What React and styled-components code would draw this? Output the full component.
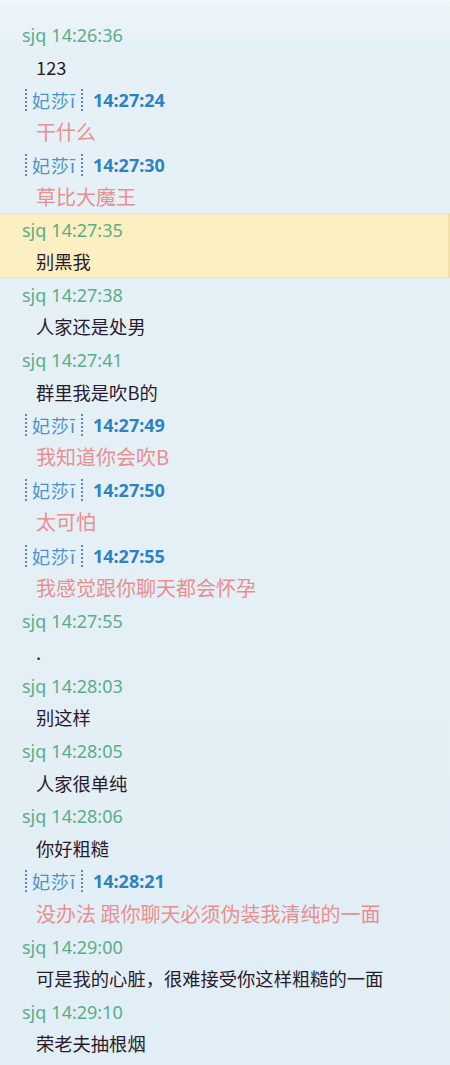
import React from "react";
import styled, { createGlobalStyle } from "styled-components";

const GlobalStyle = createGlobalStyle`
  html, body {
    margin: 0;
    padding: 0;
    background: #e3eff5;
  }
  body {
    font-family: "Noto Sans", "Noto Sans CJK SC", sans-serif;
  }
`;

const Window = styled.div`
  width: 450px;
  height: 1065px;
  overflow: hidden;
  box-sizing: border-box;
  padding-top: 16px;
  background: linear-gradient(180deg, #eef5f9 0px, #e6f1f7 40px, #e2eef5 100%);
  border-top: 2px solid #f4f8fb;
`;

const Message = styled.div`
  height: 65.2px;
  box-sizing: border-box;
  display: flex;
  flex-direction: column;
  background: ${(p) => (p.$active ? "#fcefc1" : "transparent")};
  border-top: 1px solid ${(p) => (p.$active ? "#f3e3ae" : "transparent")};
  border-bottom: 1px solid ${(p) => (p.$active ? "#f3e3ae" : "transparent")};
  border-right: 2px solid ${(p) => (p.$active ? "#f1e0a8" : "transparent")};
  margin-top: ${(p) => (p.$active ? "-1px" : "0")};
`;

const Header = styled.div`
  height: 32px;
  display: flex;
  align-items: center;
  padding-left: ${(p) => (p.$me ? "22px" : "25px")};
  font-size: 18px;
  color: ${(p) => (p.$me ? "#5aae88" : "#2f82c2")};
  white-space: nowrap;
`;

const Name = styled.span`
  font-family: "Noto Sans CJK SC", sans-serif;
  color: #4b92cf;
  font-size: 18px;
  letter-spacing: 1px;
  margin: 0 5px 0 5px;
`;

const Bar = styled.span`
  display: inline-block;
  width: 0;
  height: 22px;
  border-left: 2px dotted #4f8ec6;
  vertical-align: middle;
`;

const Time = styled.span`
  font-weight: ${(p) => (p.$bold ? 700 : 400)};
  margin-left: ${(p) => (p.$bold ? "10px" : "5px")};
`;

const Body = styled.div`
  flex: 1;
  display: flex;
  align-items: center;
  padding-left: 36px;
  font-family: "Noto Sans CJK SC", sans-serif;
  font-size: ${(p) => (p.$me ? "18.3px" : "20px")};
  color: ${(p) => (p.$me ? "#2a1b2c" : "#e98f8f")};
  white-space: nowrap;
`;

const messages = [
  { me: true, time: "14:26:36", text: "123" },
  { me: false, time: "14:27:24", text: "干什么" },
  { me: false, time: "14:27:30", text: "草比大魔王" },
  { me: true, time: "14:27:35", text: "别黑我", active: true },
  { me: true, time: "14:27:38", text: "人家还是处男" },
  { me: true, time: "14:27:41", text: "群里我是吹B的" },
  { me: false, time: "14:27:49", text: "我知道你会吹B" },
  { me: false, time: "14:27:50", text: "太可怕" },
  { me: false, time: "14:27:55", text: "我感觉跟你聊天都会怀孕" },
  { me: true, time: "14:27:55", text: "." },
  { me: true, time: "14:28:03", text: "别这样" },
  { me: true, time: "14:28:05", text: "人家很单纯" },
  { me: true, time: "14:28:06", text: "你好粗糙" },
  { me: false, time: "14:28:21", text: "没办法 跟你聊天必须伪装我清纯的一面" },
  { me: true, time: "14:29:00", text: "可是我的心脏，很难接受你这样粗糙的一面" },
  { me: true, time: "14:29:10", text: "荣老夫抽根烟" },
];

export default function App() {
  return (
    <>
      <GlobalStyle />
      <Window>
        {messages.map((m, i) => (
          <Message key={i} $active={m.active}>
            <Header $me={m.me}>
              {m.me ? (
                <>
                  sjq<Time>{m.time}</Time>
                </>
              ) : (
                <>
                  <Bar />
                  <Name>妃莎ī</Name>
                  <Bar />
                  <Time $bold>{m.time}</Time>
                </>
              )}
            </Header>
            <Body $me={m.me}>{m.text}</Body>
          </Message>
        ))}
      </Window>
    </>
  );
}
